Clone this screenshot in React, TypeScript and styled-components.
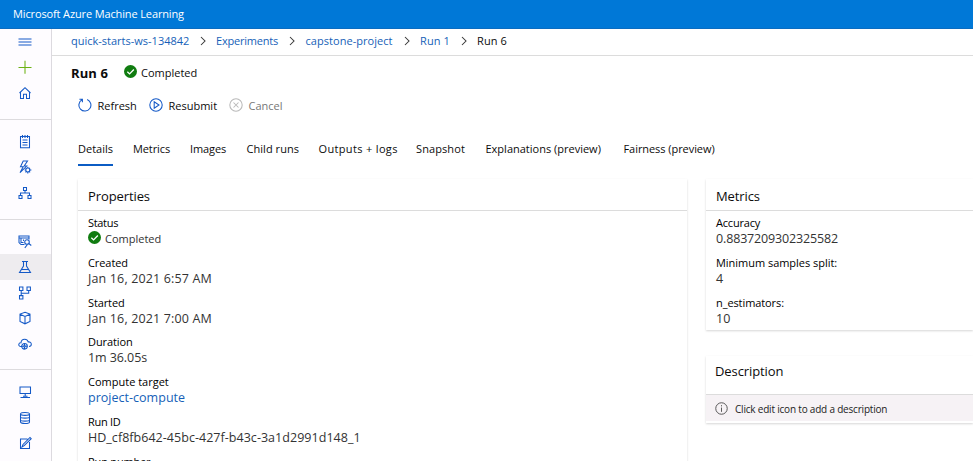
import React from "react";
import styled, { createGlobalStyle, css } from "styled-components";

const LINK = "#165fb8";
const ICON = "#1459c7";

const GlobalStyle = createGlobalStyle`
  * { box-sizing: border-box; }
  body {
    margin: 0;
    overflow: hidden;
    background: #fff;
    color: #0c0c0c;
    font: 11px/16px "Open Sans", "Noto Sans", sans-serif;
  }
`;

const Page = styled.div`
  display: flex;
  flex-direction: column;
  height: 461px;
  overflow: hidden;
`;

const TopBar = styled.header`
  flex: none;
  height: 29px;
  padding: 6px 13px 0;
  background: #0078d7;
  border-bottom: 1px solid #0b6cc0;
  color: #fff;
  letter-spacing: -0.13px;
`;

const Body = styled.div`
  display: flex;
  flex: 1;
  min-height: 0;
`;

const Sidebar = styled.nav`
  flex: none;
  width: 52px;
  background: #fefcff;
  border-right: 1px solid #dcdadf;
  overflow: hidden;
`;

const NavGroup = styled.div`
  padding-bottom: 13.2px;
  & + & {
    border-top: 1px solid #dddbde;
    padding-top: 9.2px;
  }
`;

const NavItem = styled.div<{ $active?: boolean }>`
  display: flex;
  align-items: center;
  justify-content: center;
  height: 25.5px;
  padding-right: 1px;
  background: ${(p) => (p.$active ? "#eeecef" : "transparent")};
`;

const Icon = styled.svg<{ $color?: string; $size?: number }>`
  display: block;
  flex: none;
  width: ${(p) => p.$size ?? 14}px;
  height: ${(p) => p.$size ?? 14}px;
  fill: none;
  stroke: ${(p) => p.$color ?? ICON};
  stroke-width: 1.05;
`;

const Main = styled.main`
  flex: 1;
  min-width: 0;
`;

const Breadcrumbs = styled.div`
  display: flex;
  align-items: center;
  height: 27px;
  padding: 0 0 2px 19px;
  border-bottom: 1px solid #dcdcdc;
`;

const Text = styled.span<{ $w?: number; $track?: number; $tone?: string }>`
  flex: none;
  white-space: pre;
  ${(p) => p.$w && css`width: ${p.$w}px;`}
  letter-spacing: ${(p) => p.$track ?? 0}px;
  color: ${(p) => p.$tone ?? "inherit"};
`;

const Separator = styled.span`
  display: flex;
  justify-content: center;
  width: 27px;
`;

const TitleRow = styled.div`
  display: flex;
  align-items: center;
  height: 34px;
  padding-left: 19px;
  svg { margin-top: -3px; }
`;

const Title = styled.h1`
  width: 53px;
  margin: 0;
  font-size: 13px;
  font-weight: 700;
  letter-spacing: 0.1px;
`;

const StatusText = styled.span<{ $gap: number; $tone?: string }>`
  margin-left: ${(p) => p.$gap}px;
  color: ${(p) => p.$tone ?? "#0c0c0c"};
`;

const Toolbar = styled.div`
  display: flex;
  align-items: center;
  height: 32px;
  padding-left: 26px;
`;

const Command = styled.div<{ $w: number; $disabled?: boolean }>`
  display: flex;
  align-items: center;
  gap: 5.5px;
  width: ${(p) => p.$w}px;
  color: ${(p) => (p.$disabled ? "#777" : "#0c0c0c")};
  svg { margin-top: -3px; }
`;

const Tabs = styled.div`
  display: flex;
  height: 44px;
  padding: 19px 0 0 26px;
`;

const Tab = styled.div<{ $w: number; $gap: number; $track: number; $active?: boolean }>`
  flex: none;
  width: ${(p) => p.$w}px;
  height: 25px;
  margin-right: ${(p) => p.$gap}px;
  white-space: nowrap;
  letter-spacing: ${(p) => p.$track}px;
  border-bottom: 2px solid ${(p) => (p.$active ? "#0b5cc4" : "transparent")};
`;

const Columns = styled.div`
  display: grid;
  grid-template-columns: 609px 1fr;
  column-gap: 19px;
  padding: 13px 0 0 26px;
`;

const Stack = styled.div`
  display: flex;
  flex-direction: column;
  gap: 26px;
`;

const Card = styled.section<{ $h: number }>`
  height: ${(p) => p.$h}px;
  background: #fff;
  box-shadow: 0 0.5px 2px rgba(0, 0, 0, 0.16);
`;

const CardHeader = styled.h2<{ $h: number; $track?: number }>`
  height: ${(p) => p.$h}px;
  margin: 0;
  padding: ${(p) => (p.$h > 35 ? "7px 9px 0" : "9px 10px 0")};
  border-bottom: 1px solid #dcdcdc;
  font-size: 13px;
  font-weight: 400;
  letter-spacing: ${(p) => p.$track ?? -0.1}px;
`;

const FieldList = styled.dl`
  display: flex;
  flex-direction: column;
  gap: 7.75px;
  margin: 0;
  padding: 4px 10px 0;
`;

const Field = styled.div`
  height: 32px;
`;

const Label = styled.dt<{ $track?: number }>`
  height: 16px;
  color: #000;
  white-space: nowrap;
  letter-spacing: ${(p) => p.$track ?? 0}px;
`;

const Value = styled.dd<{ $track?: number; $link?: boolean; $small?: boolean }>`
  display: flex;
  align-items: center;
  height: 16px;
  margin: 0;
  font-size: ${(p) => (p.$small ? 11 : 12.5)}px;
  white-space: nowrap;
  letter-spacing: ${(p) => p.$track ?? 0}px;
  color: ${(p) => (p.$link ? LINK : "#333")};
  svg { margin-top: -3px; }
`;

const Notice = styled.div`
  display: flex;
  align-items: center;
  gap: 7px;
  height: 26px;
  padding: 1px 9px 0;
  background: #f6f2f5;
  color: #222;
  font-size: 10px;
  letter-spacing: -0.2px;
`;

const CheckBadge = ({ size = 13 }: { size?: number }) => (
  <Icon viewBox="0 0 14 14" $size={size} $color="#fff">
    <circle cx="7" cy="7" r="7" fill="#107c10" stroke="none" />
    <path d="M3.6 7.3 6 9.6l4.6-4.8" strokeWidth="1.4" />
  </Icon>
);

const Chevron = () => (
  <Icon viewBox="0 0 10 10" $size={10} $color="#333">
    <path d="M3 1l4 4-4 4" />
  </Icon>
);

const navGroups: { id: string; color?: string; active?: boolean; art: React.ReactNode }[][] = [
  [
    { id: "menu", art: <path d="M.5 4h13M.5 7h13M.5 10h13" /> },
    { id: "new", color: "#6bb112", art: <path d="M.5 7.5h13M7 .8v13" /> },
    { id: "home", art: <path d="M1.5 7 7 1.7 12.5 7M2.5 6.2v6.3h3V8.3h3v4.2h3V6.2" /> },
  ],
  [
    { id: "notebooks", art: <path d="M2.5 1.5h9v11.2h-9zM4.5 0v3M7 0v3M9.5 0v3M4.5 5h5M4.5 7.5h5M4.5 10h5" /> },
    {
      id: "automl",
      art: (
        <>
          <path d="M9.5 1H5.2L2.5 6.7h2.7L2 12.7 8.7 6H6.2L9.5 1z" />
          <circle cx="9.8" cy="10" r="2" />
          <path d="M9.8 6.8V8M9.8 12v1.4M6.6 10h1.2M11.8 10h1.6M7.6 7.8l.8.8M11.2 11.4l.9.9M12 7.8l-.8.8M8.4 11.4l-.9.9" />
        </>
      ),
    },
    { id: "designer", art: <path d="M5.5 1.5h3v3h-3zM1 9.5h3v3H1zM10 9.5h3v3h-3zM7 4.5V7M2.5 9.5V7h9v2.5" /> },
  ],
  [
    {
      id: "datasets",
      art: (
        <>
          <path d="M6.5 9.5H3L1 7.5V1h10v3.5M1 3h10M3 3v4.5h2.5M5.5 6V4.5" />
          <circle cx="9" cy="7" r="2.3" />
          <path d="M10.7 8.5l2.6 2M9.5 9.5 6.8 12.8" />
        </>
      ),
    },
    { id: "experiments", active: true, art: <path d="M4 1.5h6M5.5 1.5V6L1.5 12.5h11L8.5 6V1.5M3.5 9.5h7" /> },
    { id: "pipelines", art: <path d="M1.5 1h3.4v3.4H1.500zM9 1h3.400v3.400H9zM1.500 9.600h3.400V13H1.500zM3.200 4.400v5.200M3.200 7.200h7.500V4.400" /> },
    { id: "models", art: <path d="M7 1.2 12 3v7.500L7 12.800 2 10.500V3zM2 3.200l5 2.300 5-2.300M7 5.500v7.300" /> },
    {
      id: "endpoints",
      art: (
        <>
          <path d="M4 9.500H2.800C1.300 9.500.6 8.300.8 7.300 1 6.200 2 5.700 3 5.800 3.200 3.500 4.800 2.300 6.700 2.300c1.800 0 3 1 3.500 2.600 1.800-.2 3.100.8 3.100 2.400 0 1.400-1 2.200-2.300 2.200" />
          <circle cx="6.500" cy="9.300" r="2.800" />
          <circle cx="6.500" cy="9.300" r=".8" />
          <path d="M6.500 6.500v2M6.500 10.100v2M3.700 9.300h2M7.300 9.300h2" />
        </>
      ),
    },
  ],
  [
    { id: "compute", art: <path d="M2 2h10.500v6.500H2zM7.200 8.500v2.500M5 11.300h4.500M2.500 12.500h9.500" /> },
    {
      id: "datastores",
      art: <path d="M2.500 3c0-2 9-2 9 0v8c0 2-9 2-9 0zM2.500 3c0 1.800 9 1.800 9 0M2.500 6c0 1.500 9 1.500 9 0M2.500 9c0 1.500 9 1.500 9 0" />,
    },
    { id: "labeling", art: <path d="M9.500 3h-7v9.500h9V6M4 11l1-2.500 7-7L13.200 2.700l-7 7z" /> },
  ],
];

const crumbs = [
  { text: "quick-starts-ws-134842", w: 118, track: 0 },
  { text: "Experiments", w: 62.5, track: -0.2 },
  { text: "capstone-project", w: 87.5, track: 0.04 },
  { text: "Run 1", w: 30, track: 0.1 },
];

const tabs: [string, number, number, number][] = [
  ["Details", 35, 20, 0],
  ["Metrics", 37, 20, -0.1],
  ["Images", 36, 20.5, -0.1],
  ["Child runs", 52, 20, 0.05],
  ["Outputs + logs", 79, 18.5, 0.34],
  ["Snapshot", 49, 20.5, 0.1],
  ["Explanations (preview)", 115, 23, 0],
  ["Fairness (preview)", 91, 0, -0.06],
];

type Entry = { label: string; value: string; lt?: number; vt?: number; link?: boolean; ok?: boolean };

const properties: Entry[] = [
  { label: "Status", value: "Completed", lt: -0.32, ok: true },
  { label: "Created", value: "Jan 16, 2021 6:57 AM", lt: -0.08, vt: 0.15 },
  { label: "Started", value: "Jan 16, 2021 7:00 AM", lt: -0.12, vt: 0.15 },
  { label: "Duration", value: "1m 36.05s", lt: -0.1, vt: -0.08 },
  { label: "Compute target", value: "project-compute", vt: 0.02, link: true },
  { label: "Run ID", value: "HD_cf8fb642-45bc-427f-b43c-3a1d2991d148_1", lt: -0.3, vt: 0.035 },
  { label: "Run number", value: "6", lt: -0.2 },
];

const metrics: Entry[] = [
  { label: "Accuracy", value: "0.8837209302325582", lt: -0.2, vt: -0.15 },
  { label: "Minimum samples split:", value: "4", lt: -0.03 },
  { label: "n_estimators:", value: "10", lt: -0.09 },
];

const Fields = ({ items }: { items: Entry[] }) => (
  <FieldList>
    {items.map((f) => (
      <Field key={f.label}>
        <Label $track={f.lt}>{f.label}</Label>
        <Value $track={f.vt} $link={f.link} $small={f.ok}>
          {f.ok ? (
            <>
              <CheckBadge />
              <StatusText $gap={4} $tone="#333">{f.value}</StatusText>
            </>
          ) : (
            f.value
          )}
        </Value>
      </Field>
    ))}
  </FieldList>
);

export default function App() {
  return (
    <Page>
      <GlobalStyle />
      <TopBar>Microsoft Azure Machine Learning</TopBar>
      <Body>
        <Sidebar>
          {navGroups.map((group, i) => (
            <NavGroup key={i}>
              {group.map((item) => (
                <NavItem key={item.id} $active={item.active}>
                  <Icon viewBox="0 0 14 14" $color={item.color}>{item.art}</Icon>
                </NavItem>
              ))}
            </NavGroup>
          ))}
        </Sidebar>
        <Main>
          <Breadcrumbs>
            {crumbs.map((c) => (
              <React.Fragment key={c.text}>
                <Text $w={c.w} $track={c.track} $tone={LINK}>{c.text}</Text>
                <Separator><Chevron /></Separator>
              </React.Fragment>
            ))}
            <Text $track={0.1}>Run 6</Text>
          </Breadcrumbs>
          <TitleRow>
            <Title>Run 6</Title>
            <CheckBadge />
            <StatusText $gap={4}>Completed</StatusText>
          </TitleRow>
          <Toolbar>
            <Command $w={71}>
              <Icon viewBox="0 0 14 14">
                <path d="M9.200 1.500A6 6 0 1 1 4 1.800M1.400 1.200H4.400v3" />
              </Icon>
              Refresh
            </Command>
            <Command $w={80}>
              <Icon viewBox="0 0 14 14">
                <circle cx="7" cy="7" r="6.2" />
                <path d="M5.200 3.800v6.400L10 7z" />
              </Icon>
              Resubmit
            </Command>
            <Command $w={60} $disabled>
              <Icon viewBox="0 0 14 14" $color="#b9b9b9">
                <circle cx="7" cy="7" r="6.2" />
                <path d="M4.500 4.500l5 5M9.500 4.500l-5 5" />
              </Icon>
              Cancel
            </Command>
          </Toolbar>
          <Tabs>
            {tabs.map(([text, w, gap, track], i) => (
              <Tab key={text} $w={w} $gap={gap} $track={track} $active={i === 0}>{text}</Tab>
            ))}
          </Tabs>
          <Columns>
            <Card $h={330}>
              <CardHeader $h={32}>Properties</CardHeader>
              <Fields items={properties} />
            </Card>
            <Stack>
              <Card $h={151}>
                <CardHeader $h={32}>Metrics</CardHeader>
                <Fields items={metrics} />
              </Card>
              <Card $h={67}>
                <CardHeader $h={39} $track={-0.1}>Description</CardHeader>
                <Notice>
                  <Icon viewBox="0 0 14 14" $size={13} $color="#555">
                    <circle cx="7" cy="7" r="6.2" />
                    <path d="M7 3.400v1.300M7 6v4.600" />
                  </Icon>
                  Click edit icon to add a description
                </Notice>
              </Card>
            </Stack>
          </Columns>
        </Main>
      </Body>
    </Page>
  );
}
